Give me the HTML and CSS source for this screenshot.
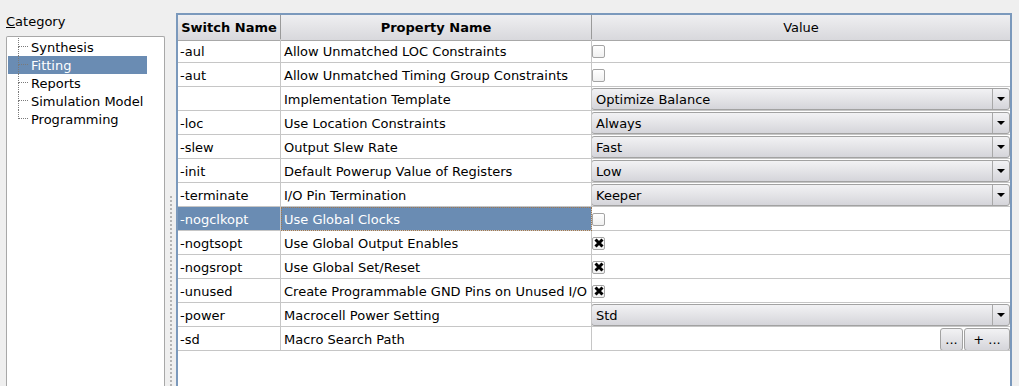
FILE: index.html
```html
<!DOCTYPE html>
<html lang="en">
<head>
    <meta charset="UTF-8">
    <title>Process Properties - Fitting</title>
    <link rel="stylesheet" href="styles.css">
</head>
<body>
    <div class="app">
        <!-- Category tree -->
        <div class="category-pane">
            <div class="category-label"><u>C</u>ategory</div>
            <div class="tree">
                <div class="tree-row"><span class="branch"><span class="branch-top"></span><span class="branch-bottom"></span></span>Synthesis</div>
                <div class="tree-row selected"><span class="branch"><span class="branch-top"></span><span class="branch-bottom"></span></span>Fitting</div>
                <div class="tree-row"><span class="branch"><span class="branch-top"></span><span class="branch-bottom"></span></span>Reports</div>
                <div class="tree-row"><span class="branch"><span class="branch-top"></span><span class="branch-bottom"></span></span>Simulation Model</div>
                <div class="tree-row last"><span class="branch"><span class="branch-top"></span><span class="branch-bottom"></span></span>Programming</div>
            </div>
        </div>

        <div class="splitter"><div class="grip"></div></div>

        <!-- Property table -->
        <div class="table-pane">
            <div class="grid">
                <div class="th bold">Switch Name</div>
                <div class="th bold">Property Name</div>
                <div class="th last-col">Value</div>

                <div class="td sw">-aul</div>
                <div class="td prop">Allow Unmatched LOC Constraints</div>
                <div class="td val"><span class="check"></span></div>

                <div class="td sw">-aut</div>
                <div class="td prop">Allow Unmatched Timing Group Constraints</div>
                <div class="td val"><span class="check"></span></div>

                <div class="td sw"></div>
                <div class="td prop">Implementation Template</div>
                <div class="td val"><div class="combo"><span class="combo-text">Optimize Balance</span><span class="combo-arrow"></span></div></div>

                <div class="td sw">-loc</div>
                <div class="td prop">Use Location Constraints</div>
                <div class="td val"><div class="combo"><span class="combo-text">Always</span><span class="combo-arrow"></span></div></div>

                <div class="td sw">-slew</div>
                <div class="td prop">Output Slew Rate</div>
                <div class="td val"><div class="combo"><span class="combo-text">Fast</span><span class="combo-arrow"></span></div></div>

                <div class="td sw">-init</div>
                <div class="td prop">Default Powerup Value of Registers</div>
                <div class="td val"><div class="combo"><span class="combo-text">Low</span><span class="combo-arrow"></span></div></div>

                <div class="td sw">-terminate</div>
                <div class="td prop">I/O Pin Termination</div>
                <div class="td val"><div class="combo"><span class="combo-text">Keeper</span><span class="combo-arrow"></span></div></div>

                <div class="td sw selected">-nogclkopt</div>
                <div class="td prop selected focus">Use Global Clocks</div>
                <div class="td val"><span class="check"></span></div>

                <div class="td sw">-nogtsopt</div>
                <div class="td prop">Use Global Output Enables</div>
                <div class="td val"><span class="check checked"><svg width="10" height="10" viewBox="0 0 10 10"><path d="M1.5 1.5 L8.5 8.5 M8.5 1.5 L1.5 8.5" stroke="#000" stroke-width="3"/></svg></span></div>

                <div class="td sw">-nogsropt</div>
                <div class="td prop">Use Global Set/Reset</div>
                <div class="td val"><span class="check checked"><svg width="10" height="10" viewBox="0 0 10 10"><path d="M1.5 1.5 L8.5 8.5 M8.5 1.5 L1.5 8.5" stroke="#000" stroke-width="3"/></svg></span></div>

                <div class="td sw">-unused</div>
                <div class="td prop">Create Programmable GND Pins on Unused I/O</div>
                <div class="td val"><span class="check checked"><svg width="10" height="10" viewBox="0 0 10 10"><path d="M1.5 1.5 L8.5 8.5 M8.5 1.5 L1.5 8.5" stroke="#000" stroke-width="3"/></svg></span></div>

                <div class="td sw">-power</div>
                <div class="td prop">Macrocell Power Setting</div>
                <div class="td val"><div class="combo"><span class="combo-text">Std</span><span class="combo-arrow"></span></div></div>

                <div class="td sw">-sd</div>
                <div class="td prop">Macro Search Path</div>
                <div class="td val buttons"><button class="tool-btn small">...</button><button class="tool-btn">+ ...</button></div>
            </div>
        </div>
    </div>
</body>
</html>
```

FILE: styles.css
```css
/* General body styling */
body {
    margin: 0;
    padding: 0;
    background-color: #efefef;
    font-family: "DejaVu Sans", sans-serif;
    font-size: 13px;
    color: #000;
}

.app {
    display: flex;
    height: 386px;
    overflow: hidden;
}

/* Category pane */
.category-pane {
    display: flex;
    flex-direction: column;
    width: 159px;
    padding: 14px 0 0 6px;
}

.category-label {
    line-height: 16px;
    height: 16px;
    margin-bottom: 6px;
}

.tree {
    flex: 1;
    background-color: #ffffff;
    border: 1px solid #a8a8a8;
    border-bottom: none;
    border-radius: 2px 2px 0 0;
    padding-top: 1px;
}

.tree-row {
    display: flex;
    align-items: center;
    height: 18px;
    width: 129px;
    margin-left: 1px;
    padding-left: 10px;
}

.tree-row.selected {
    background-color: #6a8cb3;
    color: #ffffff;
}

.branch {
    display: flex;
    flex-direction: column;
    align-self: stretch;
    width: 10px;
    margin-right: 3px;
}

.branch-top {
    height: 8px;
    border-left: 1px dotted #7a7a7a;
    border-bottom: 1px dotted #7a7a7a;
}

.branch-bottom {
    flex: 1;
    border-left: 1px dotted #7a7a7a;
}

.tree-row.last .branch-bottom {
    border-left: none;
}

/* Splitter between panes */
.splitter {
    width: 11px;
    display: flex;
    flex-direction: column;
    justify-content: flex-end;
    align-items: center;
}

.grip {
    width: 2px;
    height: 190px;
    margin-left: 1px;
    background-image: repeating-linear-gradient(to bottom, #b4b4b4 0, #b4b4b4 2px, transparent 2px, transparent 4px);
}

/* Property table */
.table-pane {
    flex: 1;
    margin: 13px 7px 0 0;
    border: 2px solid #7b99bc;
    border-bottom: none;
    background-color: #ffffff;
}

.grid {
    display: grid;
    grid-template-columns: 103px 311px 1fr;
    grid-auto-rows: 24px;
}

.th {
    height: 26px;
    line-height: 25px;
    text-align: center;
    background: linear-gradient(#efeff1, #d8d8dc);
    border-right: 1px solid #9a9a9a;
    border-bottom: 1px solid #a8a8a8;
    box-sizing: border-box;
}

.th.bold {
    font-weight: bold;
}

.th.last-col {
    border-right: none;
}

.td {
    box-sizing: border-box;
    height: 24px;
    line-height: 25px;
    border-right: 1px solid #c6c6c6;
    border-bottom: 1px solid #c6c6c6;
    white-space: nowrap;
    overflow: hidden;
}

.td.sw {
    padding-left: 2px;
}

.td.prop {
    padding-left: 3px;
}

.td.val {
    border-right: none;
    display: flex;
    align-items: center;
}

.td.selected {
    background-color: #6a8cb3;
    color: #ffffff;
}

.td.focus {
    outline: 1px dotted #a07850;
    outline-offset: -1px;
}

/* Checkbox */
.check {
    display: flex;
    align-items: center;
    justify-content: center;
    width: 13px;
    height: 13px;
    margin: 1px 0 0 0;
    border: 1px solid #a4a4a4;
    border-radius: 2px;
    background: linear-gradient(#ffffff, #f0f0f0);
    box-sizing: border-box;
}

/* Combo box */
.combo {
    display: flex;
    align-self: stretch;
    flex: 1;
    margin: 1px 0 0 -1px;
    border: 1px solid #a2a2a2;
    border-radius: 3px;
    background: linear-gradient(#f2f2f4, #d5d5da);
    line-height: 22px;
}

.combo-text {
    flex: 1;
    padding-left: 4px;
}

.combo-arrow {
    width: 16px;
    border-left: 1px solid #a8a8a8;
    display: flex;
    align-items: center;
    justify-content: center;
}

.combo-arrow::after {
    content: "";
    border-left: 4px solid transparent;
    border-right: 4px solid transparent;
    border-top: 4px solid #000;
}

/* Buttons */
.td.buttons {
    justify-content: flex-end;
    align-items: flex-start;
    gap: 1px;
}

.tool-btn {
    height: 23px;
    width: 46px;
    margin-top: 1px;
    padding: 0;
    font-family: "DejaVu Sans", sans-serif;
    font-size: 13px;
    border: 1px solid #a2a2a2;
    border-radius: 3px;
    background: linear-gradient(#f2f2f4, #d5d5da);
    color: #000;
}

.tool-btn.small {
    width: 23px;
}
```
